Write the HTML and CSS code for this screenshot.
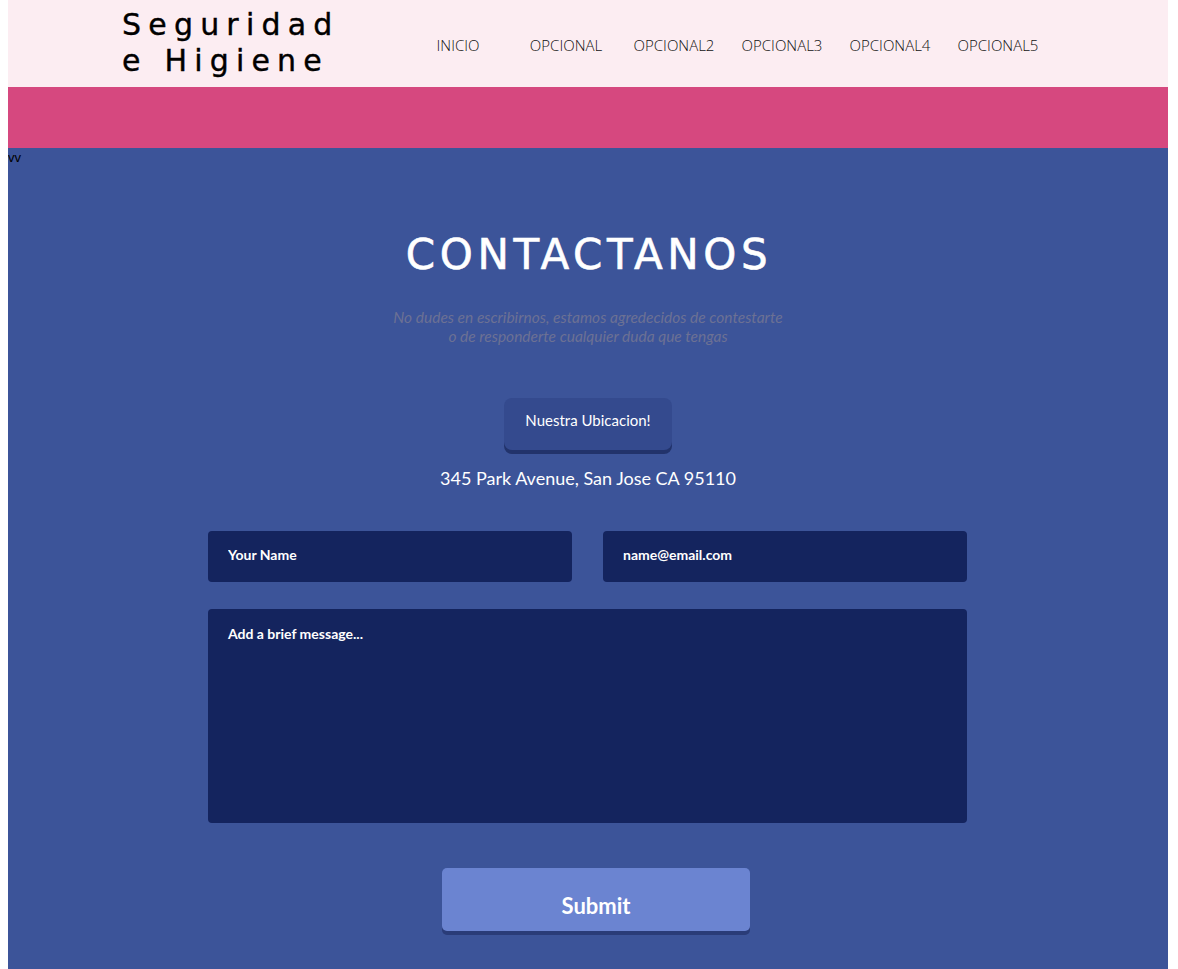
FILE: index.html
```html
<!DOCTYPE html>
<html lang="es">
<head>
<meta charset="utf-8">
<title>Seguridad e Higiene</title>
<link rel="stylesheet" href="styles.css">
</head>
<body>
<header class="topbar">
  <div class="logo">Seguridad<br>e Higiene</div>
  <nav class="menu">
    <a class="menu-item" href="#">INICIO</a>
    <a class="menu-item" href="#">OPCIONAL</a>
    <a class="menu-item" href="#">OPCIONAL2</a>
    <a class="menu-item" href="#">OPCIONAL3</a>
    <a class="menu-item" href="#">OPCIONAL4</a>
    <a class="menu-item" href="#">OPCIONAL5</a>
  </nav>
</header>
<div class="band"></div>
<section class="contact">
  <div class="stray">vv</div>
  <h1 class="title">CONTACTANOS</h1>
  <p class="subtitle">No dudes en escribirnos, estamos agredecidos de contestarte<br>o de responderte cualquier duda que tengas</p>
  <button class="loc-btn" type="button">Nuestra Ubicacion!</button>
  <p class="address">345 Park Avenue, San Jose CA 95110</p>
  <form class="form">
    <div class="row">
      <input class="field" type="text" placeholder="Your Name">
      <input class="field" type="email" placeholder="name@email.com">
    </div>
    <textarea class="field message" placeholder="Add a brief message..."></textarea>
    <div class="actions">
      <button class="submit" type="button">Submit</button>
    </div>
  </form>
</section>
</body>
</html>
```
FILE: styles.css
```css
html, body { height: 100%; }
body {
  margin: 0 10px 0 8px;
  background: #fff;
  font-family: "Lato", "Liberation Sans", sans-serif;
}
.topbar {
  display: flex;
  align-items: center;
  height: 87px;
  background: #fcedf2;
  padding-left: 114px;
  box-sizing: border-box;
}
.logo {
  width: 282px;
  font-family: "DejaVu Sans", sans-serif;
  font-size: 30px;
  line-height: 36px;
  letter-spacing: 7.2px;
  color: #000;
  margin-top: -2px;
  -webkit-text-stroke: 0.4px #000;
}
.menu { display: flex; padding-top: 2px; }
.menu-item {
  width: 108px;
  text-align: center;
  font-family: "Open Sans", sans-serif;
  font-weight: 300;
  font-size: 15px;
  color: #111;
  text-decoration: none;
}
.band { height: 61px; background: #d6487f; }
.contact {
  background: #3c5499;
  min-height: 830px;
  display: flex;
  flex-direction: column;
  align-items: center;
}
.stray {
  align-self: flex-start;
  font-family: "Liberation Sans", sans-serif;
  font-size: 13px;
  line-height: 1;
  margin-top: 3px;
  color: #000;
}
.title {
  margin: 67px 0 0;
  font-family: "DejaVu Sans", sans-serif;
  font-weight: normal;
  font-size: 42px;
  line-height: 48px;
  letter-spacing: 4.6px;
  color: #fff;
  -webkit-text-stroke: 0.6px #fff;
  padding-left: 2px;
}
.subtitle {
  margin: 29px 0 0;
  font-family: "Lato", sans-serif;
  font-style: italic;
  font-weight: 400;
  font-size: 15.5px;
  line-height: 19px;
  text-align: center;
  color: #6c7194;
}
.loc-btn {
  margin-top: 52px;
  width: 168px;
  height: 52px;
  border: 0;
  border-radius: 8px;
  background: #344a8e;
  box-shadow: 0 4px 0 #22336b;
  color: #fff;
  font-family: "Lato", sans-serif;
  font-size: 15px;
  padding: 0 0 8px;
}
.address {
  margin: 16px 0 0;
  font-size: 18px;
  line-height: 24px;
  color: #fff;
}
.form {
  margin-top: 41px;
  width: 759px;
  margin-right: 1px;
  display: flex;
  flex-direction: column;
  gap: 27px;
}
.row { display: flex; gap: 31px; }
.field {
  flex: 1;
  height: 51px;
  box-sizing: border-box;
  border: 0;
  border-radius: 4px;
  background: #14245e;
  color: #fff;
  padding: 0 20px 4px;
  font-family: "Lato", sans-serif;
  font-weight: 700;
  font-size: 14px;
  outline: none;
}
.field::placeholder { color: #fff; opacity: 1; }
.message {
  flex: none;
  height: 214px;
  padding: 16px 20px;
  resize: none;
}
.actions { display: flex; justify-content: center; margin-top: 18px; }
.submit {
  width: 308px;
  height: 63px;
  border: 0;
  border-radius: 5px;
  background: #6b84d1;
  box-shadow: 0 4px 0 #2a3c78;
  color: #fff;
  font-family: "Lato", sans-serif;
  font-weight: 700;
  font-size: 22px;
  padding-top: 12px;
  margin-left: 17px;
}
```
